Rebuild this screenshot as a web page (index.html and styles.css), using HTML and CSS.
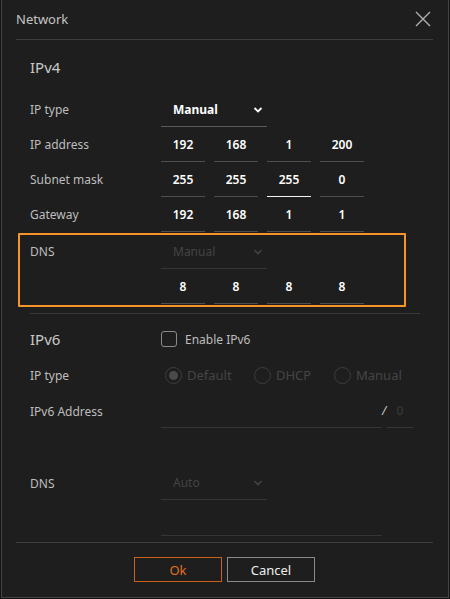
FILE: index.html
```html
<!DOCTYPE html>
<html lang="en">
<head>
  <meta charset="UTF-8">
  <meta name="viewport" content="width=device-width, initial-scale=1.0">
  <title>Network</title>
  <link rel="stylesheet" href="styles.css">
</head>
<body>
  <div class="dialog">
    <div class="dialog-header">
      <span class="title">Network</span>
      <button class="close" type="button" aria-label="Close">
        <svg width="16" height="16" viewBox="0 0 16 16"><path d="M1 1 L15 15 M15 1 L1 15" stroke="#b0b0b0" stroke-width="1.4" fill="none"/></svg>
      </button>
    </div>

    <div class="dialog-body">
      <section class="group v4">
        <h2>IPv4</h2>
        <div class="row">
          <label>IP type</label>
          <div class="select">
            <span>Manual</span>
            <svg class="chevron" width="10" height="6" viewBox="0 0 10 6"><path d="M1.5 1 L5 4.5 L8.5 1" stroke="#fff" stroke-width="1.8" fill="none"/></svg>
          </div>
        </div>
        <div class="row">
          <label>IP address</label>
          <div class="octets">
            <span class="field">192</span><span class="field">168</span><span class="field">1</span><span class="field">200</span>
          </div>
        </div>
        <div class="row">
          <label>Subnet mask</label>
          <div class="octets">
            <span class="field">255</span><span class="field">255</span><span class="field focus">255</span><span class="field">0</span>
          </div>
        </div>
        <div class="row">
          <label>Gateway</label>
          <div class="octets">
            <span class="field">192</span><span class="field">168</span><span class="field">1</span><span class="field">1</span>
          </div>
        </div>

        <div class="highlight">
          <div class="row">
            <label>DNS</label>
            <div class="select disabled">
              <span>Manual</span>
              <svg class="chevron" width="10" height="6" viewBox="0 0 10 6"><path d="M1.5 1 L5 4.5 L8.5 1" stroke="#444" stroke-width="1.6" fill="none"/></svg>
            </div>
          </div>
          <div class="row">
            <label></label>
            <div class="octets">
              <span class="field">8</span><span class="field">8</span><span class="field">8</span><span class="field">8</span>
            </div>
          </div>
        </div>
      </section>

      <hr class="divider">

      <section class="group v6">
        <div class="row">
          <h2>IPv6</h2>
          <label class="check"><span class="box"></span>Enable IPv6</label>
        </div>
        <div class="row">
          <label>IP type</label>
          <div class="radios">
            <span class="radio checked"><span class="dot"></span>Default</span>
            <span class="radio"><span class="dot"></span>DHCP</span>
            <span class="radio"><span class="dot"></span>Manual</span>
          </div>
        </div>
        <div class="row">
          <label>IPv6 Address</label>
          <div class="address">
            <span class="field wide disabled"></span>
            <span class="slash">/</span>
            <span class="field prefix disabled">0</span>
          </div>
        </div>
        <div class="row"></div>
        <div class="row">
          <label>DNS</label>
          <div class="select disabled">
            <span>Auto</span>
            <svg class="chevron" width="10" height="6" viewBox="0 0 10 6"><path d="M1.5 1 L5 4.5 L8.5 1" stroke="#444" stroke-width="1.6" fill="none"/></svg>
          </div>
        </div>
        <div class="row">
          <label></label>
          <span class="field wide disabled"></span>
        </div>
      </section>
    </div>

    <div class="dialog-footer">
      <button class="btn primary" type="button">Ok</button>
      <button class="btn" type="button">Cancel</button>
    </div>
  </div>
</body>
</html>
```

FILE: styles.css
```css
* {
  box-sizing: border-box;
}

body {
  margin: 0;
  background-color: #121212;
  font-family: "Noto Sans", "Open Sans", sans-serif;
  font-size: 12px;
  color: #bdbdbd;
}

.dialog {
  width: 448px;
  height: 599px;
  margin: -1px 0 0 1px;
  background-color: #1e1e1e;
  border: 1px solid #454545;
  display: flex;
  flex-direction: column;
}

.dialog-header {
  display: flex;
  align-items: center;
  justify-content: space-between;
  height: 40px;
  margin: 0 15px 0 14px;
  border-bottom: 1px solid #3e3e3e;
  padding-bottom: 1px;
}

.title {
  font-size: 13px;
  color: #c4c4c4;
}

.close {
  background: none;
  border: none;
  padding: 0;
  margin-right: 2px;
  width: 16px;
  height: 16px;
  display: flex;
}

.dialog-body {
  flex: 1;
  padding: 0 0 0 28px;
}

.group h2 {
  margin: 0;
  font-size: 15px;
  font-weight: normal;
  color: #c8c8c8;
  line-height: 20px;
}

.v4 h2 {
  padding: 17px 0 16px;
}

.row {
  display: flex;
  align-items: flex-start;
  height: 35px;
}

.v6 .row {
  height: 36px;
  align-items: center;
}

.v6 .row h2,
.row label {
  width: 131px;
  flex-shrink: 0;
}

.v4 .row label {
  line-height: 34px;
}

.select {
  width: 106px;
  height: 34px;
  border-bottom: 1px solid #5a5a5a;
  display: flex;
  align-items: center;
  justify-content: space-between;
  padding: 0 4px 0 12px;
  font-weight: bold;
  color: #fff;
}

.select.disabled {
  font-weight: normal;
  color: #444;
  border-bottom-color: #353535;
}

.octets {
  display: flex;
  gap: 9px;
}

.field {
  width: 44px;
  height: 34px;
  line-height: 34px;
  text-align: center;
  border-bottom: 1px solid #4e4e4e;
  font-weight: 600;
  color: #fff;
}

.field.focus {
  border-bottom-color: #f2f2f2;
}

.field.disabled {
  font-weight: normal;
  color: #3c3c3c;
  border-bottom-color: #353535;
}

.field.wide {
  width: 221px;
}

.address {
  display: flex;
  align-items: flex-start;
  height: 34px;
}

.slash {
  line-height: 34px;
  width: 4px;
  color: #c8c8c8;
  font-style: italic;
}

.field.prefix {
  width: 26px;
  margin-left: 1px;
}

.highlight {
  margin: 0 42px 0 -12px;
  padding-left: 10px;
  border: 2px solid #f7942a;
  border-radius: 1px;
}

.divider {
  margin: 6px 28px 7px 0;
  border: none;
  border-top: 1px solid #393939;
}

.check {
  display: flex;
  align-items: center;
  gap: 8px;
  color: #bdbdbd;
  width: auto !important;
}

.check .box {
  width: 16px;
  height: 16px;
  border: 1.5px solid #8a8a8a;
  border-radius: 3px;
}

.radios {
  display: flex;
  align-items: center;
  color: #454545;
  font-size: 13px;
}

.radio {
  display: flex;
  align-items: center;
  gap: 5px;
  margin-left: 4px;
}

.radio + .radio {
  margin-left: 0;
}

.radio:nth-child(1) {
  width: 89px;
}

.radio:nth-child(2) {
  width: 80px;
}

.radio .dot {
  width: 17px;
  height: 17px;
  border: 1.5px solid #3e3e3e;
  border-radius: 50%;
  display: flex;
  align-items: center;
  justify-content: center;
}

.radio.checked .dot::after {
  content: "";
  width: 9px;
  height: 9px;
  border-radius: 50%;
  background-color: #4a4a4a;
}

.dialog-footer {
  margin: 0 15px 0 14px;
  border-top: 1px solid #3e3e3e;
  height: 55px;
  display: flex;
  justify-content: center;
  align-items: flex-start;
  gap: 5px;
  padding: 14px 0 0 0;
}

.btn {
  width: 88px;
  height: 25px;
  background-color: #1e1e1e;
  border: 1px solid #8a8a8a;
  color: #eeeeee;
  font-family: "Noto Sans", "Open Sans", sans-serif;
  font-size: 13px;
  padding: 0;
}

.btn.primary {
  border-color: #c9601c;
  color: #e0701e;
}
```
